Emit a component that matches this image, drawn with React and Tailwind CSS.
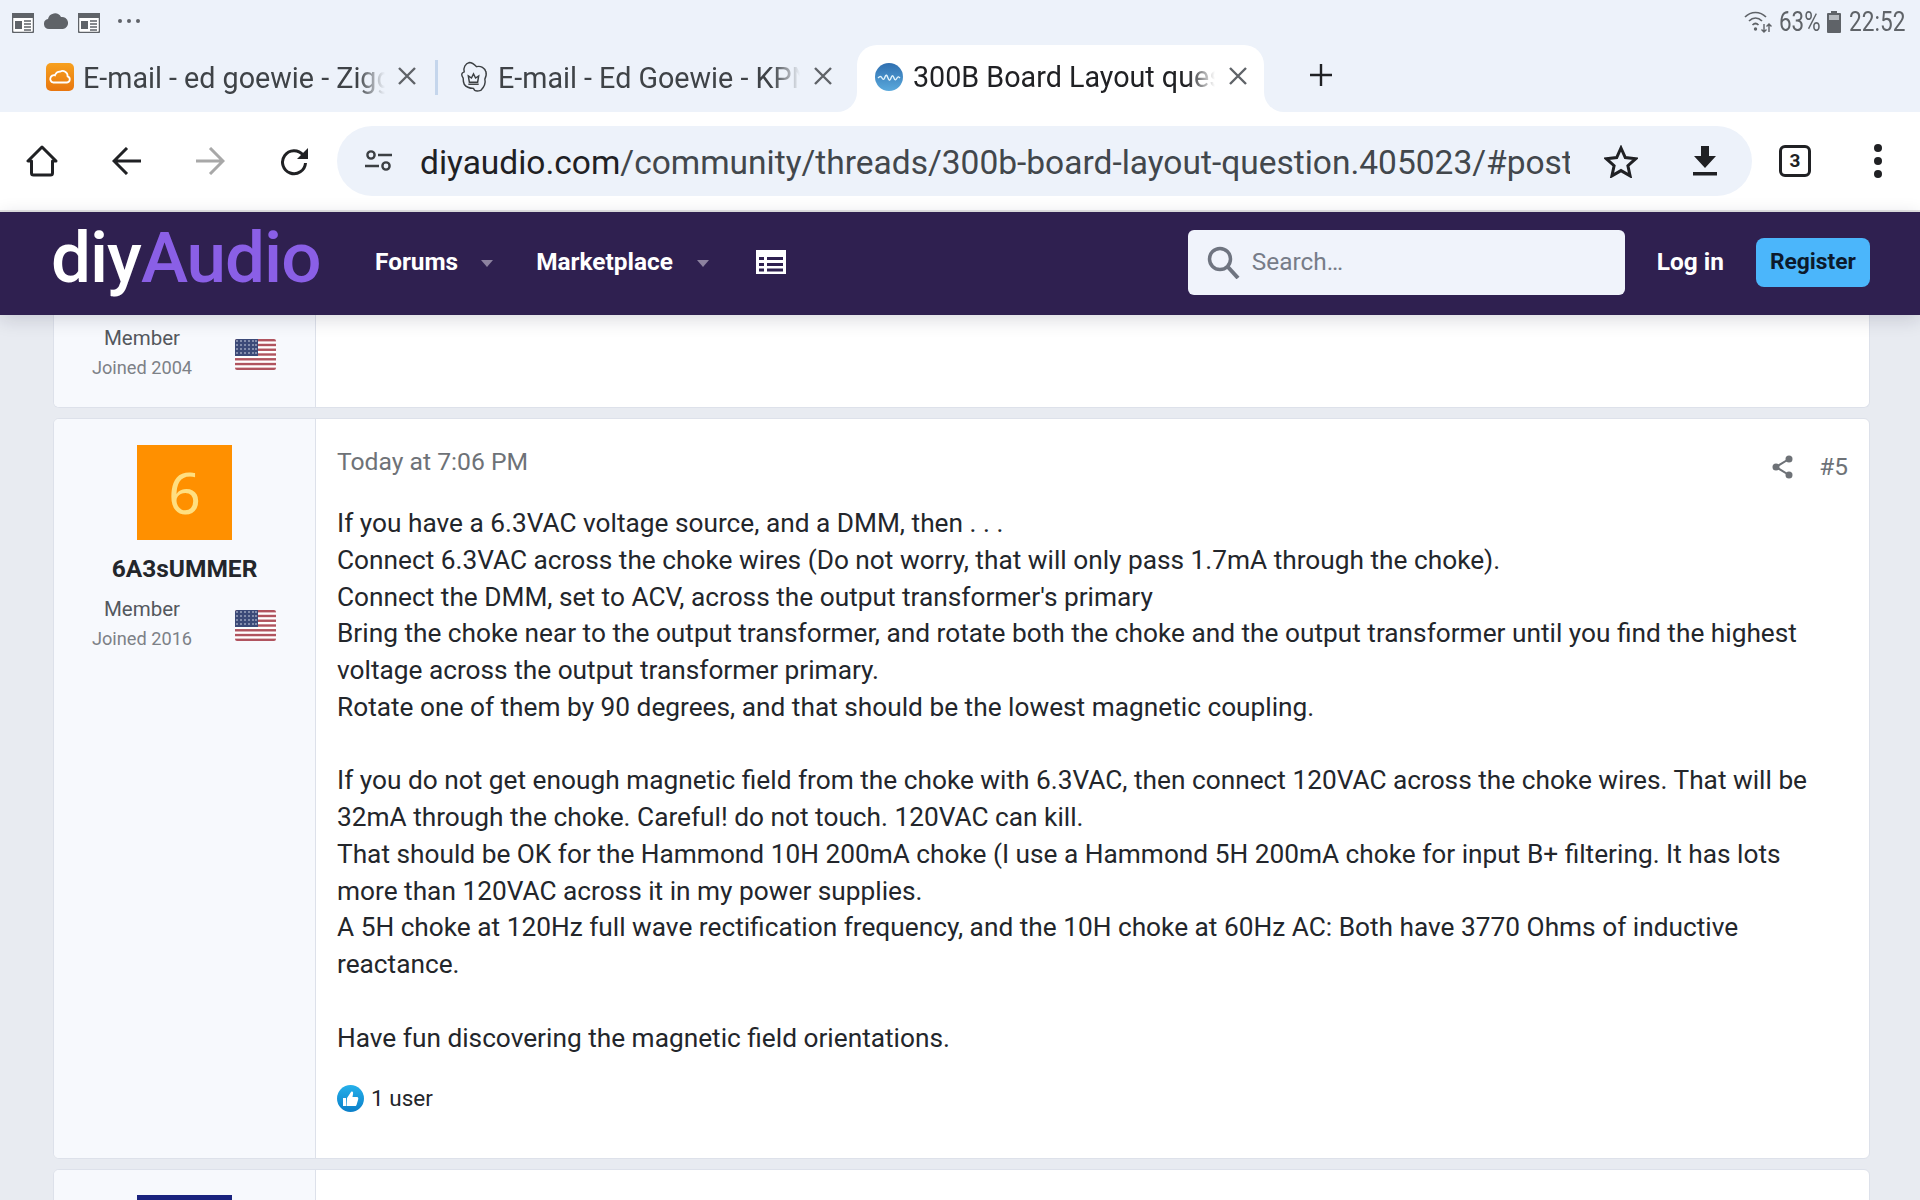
import React from "react";

const Cal = () => (
  <svg width="22" height="20" viewBox="0 0 22 20" className="shrink-0">
    <rect x="0.5" y="0.5" width="21" height="19" rx="1.5" fill="#fff" stroke="#5f6368" strokeWidth="1.5" />
    <rect x="0" y="0" width="22" height="5" fill="#5f6368" />
    <path d="M3 8h7v8H3z" fill="#5f6368" />
    <path d="M12 8h7M12 11h7M12 14h7M12 17h7" stroke="#5f6368" strokeWidth="1.6" />
  </svg>
);

const X = ({ c = "#5f6368" }) => (
  <svg width="22" height="22" viewBox="0 0 22 22" className="shrink-0">
    <path d="M3 3l16 16M19 3L3 19" stroke={c} strokeWidth="2.4" />
  </svg>
);

const Flag = () => (
  <svg width="41" height="31" viewBox="0 0 41 31" className="shrink-0 rounded-[2px] mt-[3px]">
    <rect width="41" height="31" fill="#fff" />
    {[0, 1, 2, 3, 4, 5, 6].map((i) => (
      <rect key={i} y={i * 4.77} width="41" height="2.4" fill="#b0545f" />
    ))}
    <rect width="23" height="17" fill="#3c4a78" />
    {[2, 6, 10, 14].map((y) =>
      [2, 6, 10, 14, 18, 21].map((x) => <circle key={x + "-" + y} cx={x} cy={y} r="0.8" fill="#dfe3ee" />)
    )}
  </svg>
);

const UserRow = ({ joined }) => (
  <div className="flex items-center pl-[13px] gap-[18px]">
    <div className="flex flex-col items-center w-[150px]">
      <div className="text-[20.5px] leading-[29px] text-[#54585e]">Member</div>
      <div className="text-[18.2px] leading-[29px] text-[#7d8187]">{joined}</div>
    </div>
    <Flag />
  </div>
);

const fade = "[mask-image:linear-gradient(to_right,black_91%,transparent_100%)]";

const Flare = ({ side }) => (
  <span className={side === "l" ? "absolute bottom-0 -left-[20px] w-[20px] h-[20px] bg-white" : "absolute bottom-0 -right-[20px] w-[20px] h-[20px] bg-white"}>
    <span className={side === "l" ? "block w-full h-full bg-[#edf2fa] rounded-br-[20px]" : "block w-full h-full bg-[#edf2fa] rounded-bl-[20px]"} />
  </span>
);

function Tabs() {
  return (
    <div className="h-[67px] bg-[#edf2fa] flex items-start pl-[46px] text-[28.700px] leading-[40px]">
      <div className="flex items-center h-[62px] w-[392px] shrink-0">
        <svg width="28" height="28" viewBox="0 0 28 28" className="shrink-0 mt-[2px]">
          <defs>
            <linearGradient id="zg" x1="0" y1="0" x2="0" y2="1">
              <stop offset="0" stopColor="#f7a11f" />
              <stop offset="1" stopColor="#e8760e" />
            </linearGradient>
          </defs>
          <rect width="28" height="28" rx="5" fill="url(#zg)" />
          <path d="M7 19.5h14a3.2 3.2 0 0 0 .6-6.2 5 5 0 0 0-7.6-4.6 5.4 5.4 0 0 0-5 3.6A3.7 3.7 0 0 0 7 19.500z" fill="none" stroke="#fff" strokeWidth="1.8" />
        </svg>
        <span className={"mt-[3px] ml-[9px] w-[308px] overflow-hidden whitespace-nowrap text-[#3f4347] " + fade}>E-mail - ed goewie - Ziggo</span>
        <span className="ml-[11px]"><X /></span>
        <span className="ml-[17px] w-[3px] h-[35px] bg-[#c5d6ec] shrink-0 mt-[3px]" />
      </div>
      <div className="flex items-center h-[62px] w-[419px] pl-[20px] shrink-0">
        <svg width="31" height="34" viewBox="0 0 30 32" className="shrink-0 mt-[2px]" fill="none" stroke="#3c4043" strokeWidth="1.4">
          <path d="M6 11c-1-4 1-8 5-9 3 0 5 2 7 4 4-1 8 1 9 5 1 3 0 5-1 7 1 4-1 8-4 11-3 1-6 1-7-2-3 0-7-1-9-4-1-2-1-4-1-6-2-3-2-5 1-6z" />
          <path d="M10 15l3 2 2-4 2 4 3-2-1 6h-8z" />
          <path d="M10 23h10" />
        </svg>
        <span className={"mt-[3px] ml-[9px] w-[302px] overflow-hidden whitespace-nowrap text-[#3f4347] " + fade}>E-mail - Ed Goewie - KPN</span>
        <span className="ml-[12px]"><X /></span>
      </div>
      <div className="relative flex items-center self-end h-[67px] w-[407px] pl-[18px] shrink-0 bg-white rounded-t-[20px]">
        <Flare side="l" />
        <Flare side="r" />
        <svg width="28" height="28" viewBox="0 0 28 28" className="shrink-0 -mt-[3px]">
          <defs>
            <linearGradient id="bg" x1="0" y1="0" x2="0" y2="1">
              <stop offset="0" stopColor="#2f6fb0" />
              <stop offset="1" stopColor="#5aa9dc" />
            </linearGradient>
          </defs>
          <circle cx="14" cy="14" r="14" fill="url(#bg)" />
          <path d="M3 15c2-2 3-2 4 0s2 2 3-1 2-2 3 1 2 3 3 0 2-3 3 0 2 2 3 0 2-1 3 0" fill="none" stroke="#dff1fb" strokeWidth="1.4" />
        </svg>
        <span className={"-mt-[3px] ml-[10px] w-[302px] overflow-hidden whitespace-nowrap text-[#202124] " + fade}>300B Board Layout question</span>
        <span className="-mt-[5px] ml-[12px]"><X /></span>
      </div>
      <svg width="24" height="24" viewBox="0 0 24 24" className="ml-[45px] mt-[18px] shrink-0">
        <path d="M12 1v22M1 12h22" stroke="#202124" strokeWidth="2.4" />
      </svg>
    </div>
  );
}

function Toolbar() {
  return (
    <div className="h-[98px] bg-white flex items-center relative">
      <svg width="32" height="32" viewBox="0 0 32 32" className="ml-[26px] shrink-0" fill="none" stroke="#202124" strokeWidth="3" strokeLinejoin="round">
        <path d="M16 2L2 16h3.5v12a2 2 0 0 0 2 2h17a2 2 0 0 0 2-2V16H30z" />
      </svg>
      <svg width="29" height="28" viewBox="0 0 29 28" className="ml-[54px] shrink-0" fill="none" stroke="#202124" strokeWidth="3">
        <path d="M29 14H3M15 1L2 14l13 13" />
      </svg>
      <svg width="29" height="28" viewBox="0 0 29 28" className="ml-[55px] shrink-0" fill="none" stroke="#a8a8a8" strokeWidth="3">
        <path d="M0 14h26M14 1l13 13-13 13" />
      </svg>
      <svg width="29" height="29" viewBox="0 0 29 29" className="ml-[55px] shrink-0" fill="none">
        <path d="M23 8A11.500 11.500 0 1 0 25.500 16" stroke="#202124" strokeWidth="3" />
        <path d="M28 1v11H17z" fill="#202124" />
      </svg>
      <div className="ml-[28px] w-[1415px] h-[70px] rounded-full bg-[#edf2fa] flex items-center shrink-0">
        <svg width="27" height="22" viewBox="0 0 27 22" className="ml-[28px] shrink-0" fill="none" stroke="#3c4043" strokeWidth="2.4">
          <circle cx="6" cy="5" r="3.6" />
          <path d="M13 5h14M0 16h14" />
          <circle cx="21" cy="16" r="3.6" />
        </svg>
        <div className="ml-[28px] mt-[3px] w-[1150px] overflow-hidden whitespace-nowrap text-[33.500px] leading-[44px] text-[#42474c]">
          <span className="text-[#1f2124]">diyaudio.com</span>/community/threads/300b-board-layout-question.405023/#post
        </div>
        <svg width="34" height="33" viewBox="0 0 34 33" className="ml-[34px] shrink-0" fill="none" stroke="#202124" strokeWidth="3" strokeLinejoin="miter">
          <path d="M17 3l4.3 9.6 10.4 1.1-7.8 7 2.2 10.2L17 25.6 7.900 30.900l2.200-10.200-7.800-7 10.400-1.100z" />
        </svg>
        <svg width="26" height="30" viewBox="0 0 26 30" className="ml-[54px] shrink-0" fill="#202124">
          <path d="M9 0h8v10h7L13 22 2 10h7z" />
          <rect x="1" y="26" width="24" height="3.500" />
        </svg>
      </div>
      <div className="ml-[27px] w-[32px] h-[32px] rounded-[6px] border-[3px] border-[#202124] flex items-center justify-center text-[19px] font-bold text-[#202124] shrink-0">3</div>
      <div className="ml-[63px] flex flex-col gap-[5px] shrink-0">
        <span className="w-[8px] h-[8px] rounded-full bg-[#202124]" />
        <span className="w-[8px] h-[8px] rounded-full bg-[#202124]" />
        <span className="w-[8px] h-[8px] rounded-full bg-[#202124]" />
      </div>
    </div>
  );
}

const Caret = () => <span className="block w-0 h-0 border-l-[6.500px] border-r-[6.500px] border-t-[7px] border-l-transparent border-r-transparent border-t-[#8d829f] shrink-0" />;

function Nav() {
  return (
    <div className="relative z-10 h-[103px] bg-[#2f2050] flex items-center shadow-[0_4px_18px_rgba(20,20,50,0.16)] shrink-0">
      <div className="ml-[51px] w-[270px] text-[71px] leading-[72px] font-medium tracking-[-1px] -mt-[11px] whitespace-nowrap shrink-0">
        <span className="text-white">diy</span><span className="text-[#8a5fe6]">Audio</span>
      </div>
      <div className="ml-[54px] -mt-[2px] text-[24.400px] font-bold text-white">Forums</div>
      <span className="ml-[23px]"><Caret /></span>
      <div className="ml-[43px] -mt-[2px] text-[24.400px] font-bold text-white">Marketplace</div>
      <span className="ml-[24px]"><Caret /></span>
      <svg width="30" height="24" viewBox="0 0 30 24" className="ml-[47px] shrink-0 -mt-[4px]">
        <rect width="30" height="24" fill="#fff" />
        <path d="M3 7h5v3H3zM3 13h5v3H3zM3 18.500h5v3H3zM11 7h16v3H11zM11 13h16v3H11zM11 18.500h16v3H11z" fill="#2f2050" />
      </svg>
      <div className="ml-[402px] -mt-[2px] w-[437px] h-[65px] rounded-[6px] bg-[#f0f3fb] flex items-center shrink-0">
        <svg width="33" height="33" viewBox="0 0 33 33" className="ml-[19px] shrink-0" fill="none" stroke="#6f7480" strokeWidth="3.500">
          <circle cx="13" cy="13" r="10.500" />
          <path d="M20.500 20.500L31 32" strokeWidth="4" />
        </svg>
        <span className="ml-[12px] text-[24.400px] text-[#777c88]">Search…</span>
      </div>
      <div className="ml-[32px] -mt-[2px] text-[24.400px] font-bold text-white">Log in</div>
      <div className="ml-[32px] -mt-[2px] w-[114px] h-[49px] rounded-[8px] bg-[#4bb6fb] flex items-center justify-center text-[22.800px] font-bold text-[#0c1a2c] shrink-0">Register</div>
    </div>
  );
}

export default function App() {
  return (
    <div className="w-[1920px] h-[1200px] overflow-hidden flex flex-col bg-[#e8ebf1] font-['Roboto',sans-serif]">
      <div className="h-[45px] bg-[#edf2fa] flex items-center pl-[12px] pr-[15px] shrink-0">
        <Cal />
        <svg width="24" height="16" viewBox="0 0 24 16" className="ml-[10px] shrink-0 -mt-[4px]">
          <path d="M5 16a5 5 0 0 1-1-9.900A7 7 0 0 1 17 4a6 6 0 0 1 2 12z" fill="#5f6368" />
        </svg>
        <span className="ml-[10px]"><Cal /></span>
        <div className="ml-[18px] flex gap-[5px] -mt-[3px]">
          <span className="w-[4px] h-[4px] rounded-full bg-[#5f6368]" />
          <span className="w-[4px] h-[4px] rounded-full bg-[#5f6368]" />
          <span className="w-[4px] h-[4px] rounded-full bg-[#5f6368]" />
        </div>
        <div className="ml-auto flex items-center text-[#5f6368] -mt-[1px]">
          <svg width="29" height="24" viewBox="0 0 29 24" className="shrink-0" fill="none" stroke="#5f6368" strokeWidth="1.700">
            <path d="M1 7c6-6 15-6 21 0M5 11c4-4 9-4 13 0M8.500 15c2-2 4-2 6 0" />
            <circle cx="11.500" cy="19" r="1.700" fill="#5f6368" stroke="none" />
            <path d="M20 14v8M17.500 19.500l2.500 2.500 2.500-2.500M25 22v-8M22.500 16.500l2.500-2.500 2.500 2.500" strokeWidth="1.400" />
          </svg>
          <span className="ml-[6px] w-[41px] text-[28px] leading-[30px] scale-x-[0.8] origin-left whitespace-nowrap">63%</span>
          <svg width="14" height="22" viewBox="0 0 14 22" className="ml-[7px] shrink-0">
            <rect x="4" width="6" height="2" fill="#5f6368" />
            <rect y="2" width="14" height="20" rx="1" fill="#5f6368" />
            <rect x="2" y="4" width="10" height="5" fill="#b5b9be" />
          </svg>
          <span className="ml-[8px] w-[56px] text-[28px] leading-[30px] scale-x-[0.81] origin-left whitespace-nowrap">22:52</span>
        </div>
      </div>
      <Tabs />
      <Toolbar />
      <div className="h-[2px] bg-[#e4e4e4] shrink-0" />
      <Nav />
      <div className="flex-1 min-h-0 overflow-hidden pl-[53px] pr-[50px] flex flex-col gap-[10px]">
        <section className="h-[93px] shrink-0 bg-white border border-t-0 border-[#dde1ea] rounded-b-[6px] flex overflow-hidden">
          <aside className="w-[262px] shrink-0 bg-[#f7f9fd] border-r border-[#dde1ea] pt-[9px]">
            <UserRow joined="Joined 2004" />
          </aside>
          <div className="flex-1" />
        </section>
        <section className="h-[741px] shrink-0 bg-white border border-[#dde1ea] rounded-[6px] flex overflow-hidden">
          <aside className="w-[262px] shrink-0 bg-[#f7f9fd] border-r border-[#dde1ea] flex flex-col items-center pt-[26px]">
            <div className="w-[95px] h-[95px] bg-[#ff9000] flex items-center justify-center text-[#ffdf80] text-[57px] font-['Noto_Sans',sans-serif] leading-none shrink-0">6</div>
            <div className="mt-[14px] text-[24.500px] leading-[30px] font-bold text-[#23262b]">6A3sUMMER</div>
            <div className="mt-[11px] self-stretch">
              <UserRow joined="Joined 2016" />
            </div>
          </aside>
          <div className="flex-1 min-w-0 pl-[21px] pr-[25px] pt-[27px]">
            <div className="flex justify-between items-start">
              <span className="text-[24.700px] leading-[32px] text-[#6e7277]">Today at 7:06 PM</span>
              <div className="flex items-center mt-[5px] text-[#6e7277] -mr-[4px]">
                <svg width="21" height="24" viewBox="0 0 21 24" fill="#6e7277" className="shrink-0">
                  <circle cx="17" cy="4" r="3.500" />
                  <circle cx="4" cy="12" r="3.500" />
                  <circle cx="17" cy="20" r="3.500" />
                  <path d="M17 4L4 12l13 8" fill="none" stroke="#6e7277" strokeWidth="2" />
                </svg>
                <span className="ml-[26px] text-[24.400px] leading-[32px]">#5</span>
              </div>
            </div>
            <div className="mt-[22px] text-[26.250px] leading-[36.750px] text-[#23262b]">
              <div>If you have a 6.3VAC voltage source, and a DMM, then . . .</div>
              <div>Connect 6.3VAC across the choke wires (Do not worry, that will only pass 1.7mA through the choke).</div>
              <div>Connect the DMM, set to ACV, across the output transformer's primary</div>
              <div>Bring the choke near to the output transformer, and rotate both the choke and the output transformer until you find the highest voltage across the output transformer primary.</div>
              <div>Rotate one of them by 90 degrees, and that should be the lowest magnetic coupling.</div>
              <div className="h-[36.750px]" />
              <div>If you do not get enough magnetic field from the choke with 6.3VAC, then connect 120VAC across the choke wires. That will be 32mA through the choke. Careful! do not touch. 120VAC can kill.</div>
              <div>That should be OK for the Hammond 10H 200mA choke (I use a Hammond 5H 200mA choke for input B+ filtering. It has lots more than 120VAC across it in my power supplies.</div>
              <div>A 5H choke at 120Hz full wave rectification frequency, and the 10H choke at 60Hz AC: Both have 3770 Ohms of inductive reactance.</div>
              <div className="h-[36.750px]" />
              <div>Have fun discovering the magnetic field orientations.</div>
            </div>
            <div className="mt-[27px] flex items-center">
              <svg width="27" height="27" viewBox="0 0 27 27" className="shrink-0">
                <defs>
                  <linearGradient id="lk" x1="0" y1="0" x2="0" y2="1">
                    <stop offset="0" stopColor="#25b0ea" />
                    <stop offset="1" stopColor="#0b7fc9" />
                  </linearGradient>
                </defs>
                <circle cx="13.500" cy="13.500" r="13.500" fill="url(#lk)" />
                <path d="M6 13h3v8H6zM10 13l4-6c1.500-1 2.500 0 2 2l-.5 3h4.500c1.500 0 1.500 1.500 1 3l-1.500 5c-.3 1-1 1-2 1h-8z" fill="#fff" />
              </svg>
              <span className="ml-[7px] text-[22.500px] leading-[30px] text-[#23262b]">1 user</span>
            </div>
          </div>
        </section>
        <section className="h-[60px] shrink-0 bg-white border border-[#dde1ea] rounded-[6px] flex overflow-hidden">
          <aside className="w-[262px] shrink-0 bg-[#f7f9fd] border-r border-[#dde1ea] flex flex-col items-center pt-[25px]">
            <div className="w-[95px] h-[95px] bg-[#1a237e] shrink-0" />
          </aside>
          <div className="flex-1" />
        </section>
      </div>
    </div>
  );
}
